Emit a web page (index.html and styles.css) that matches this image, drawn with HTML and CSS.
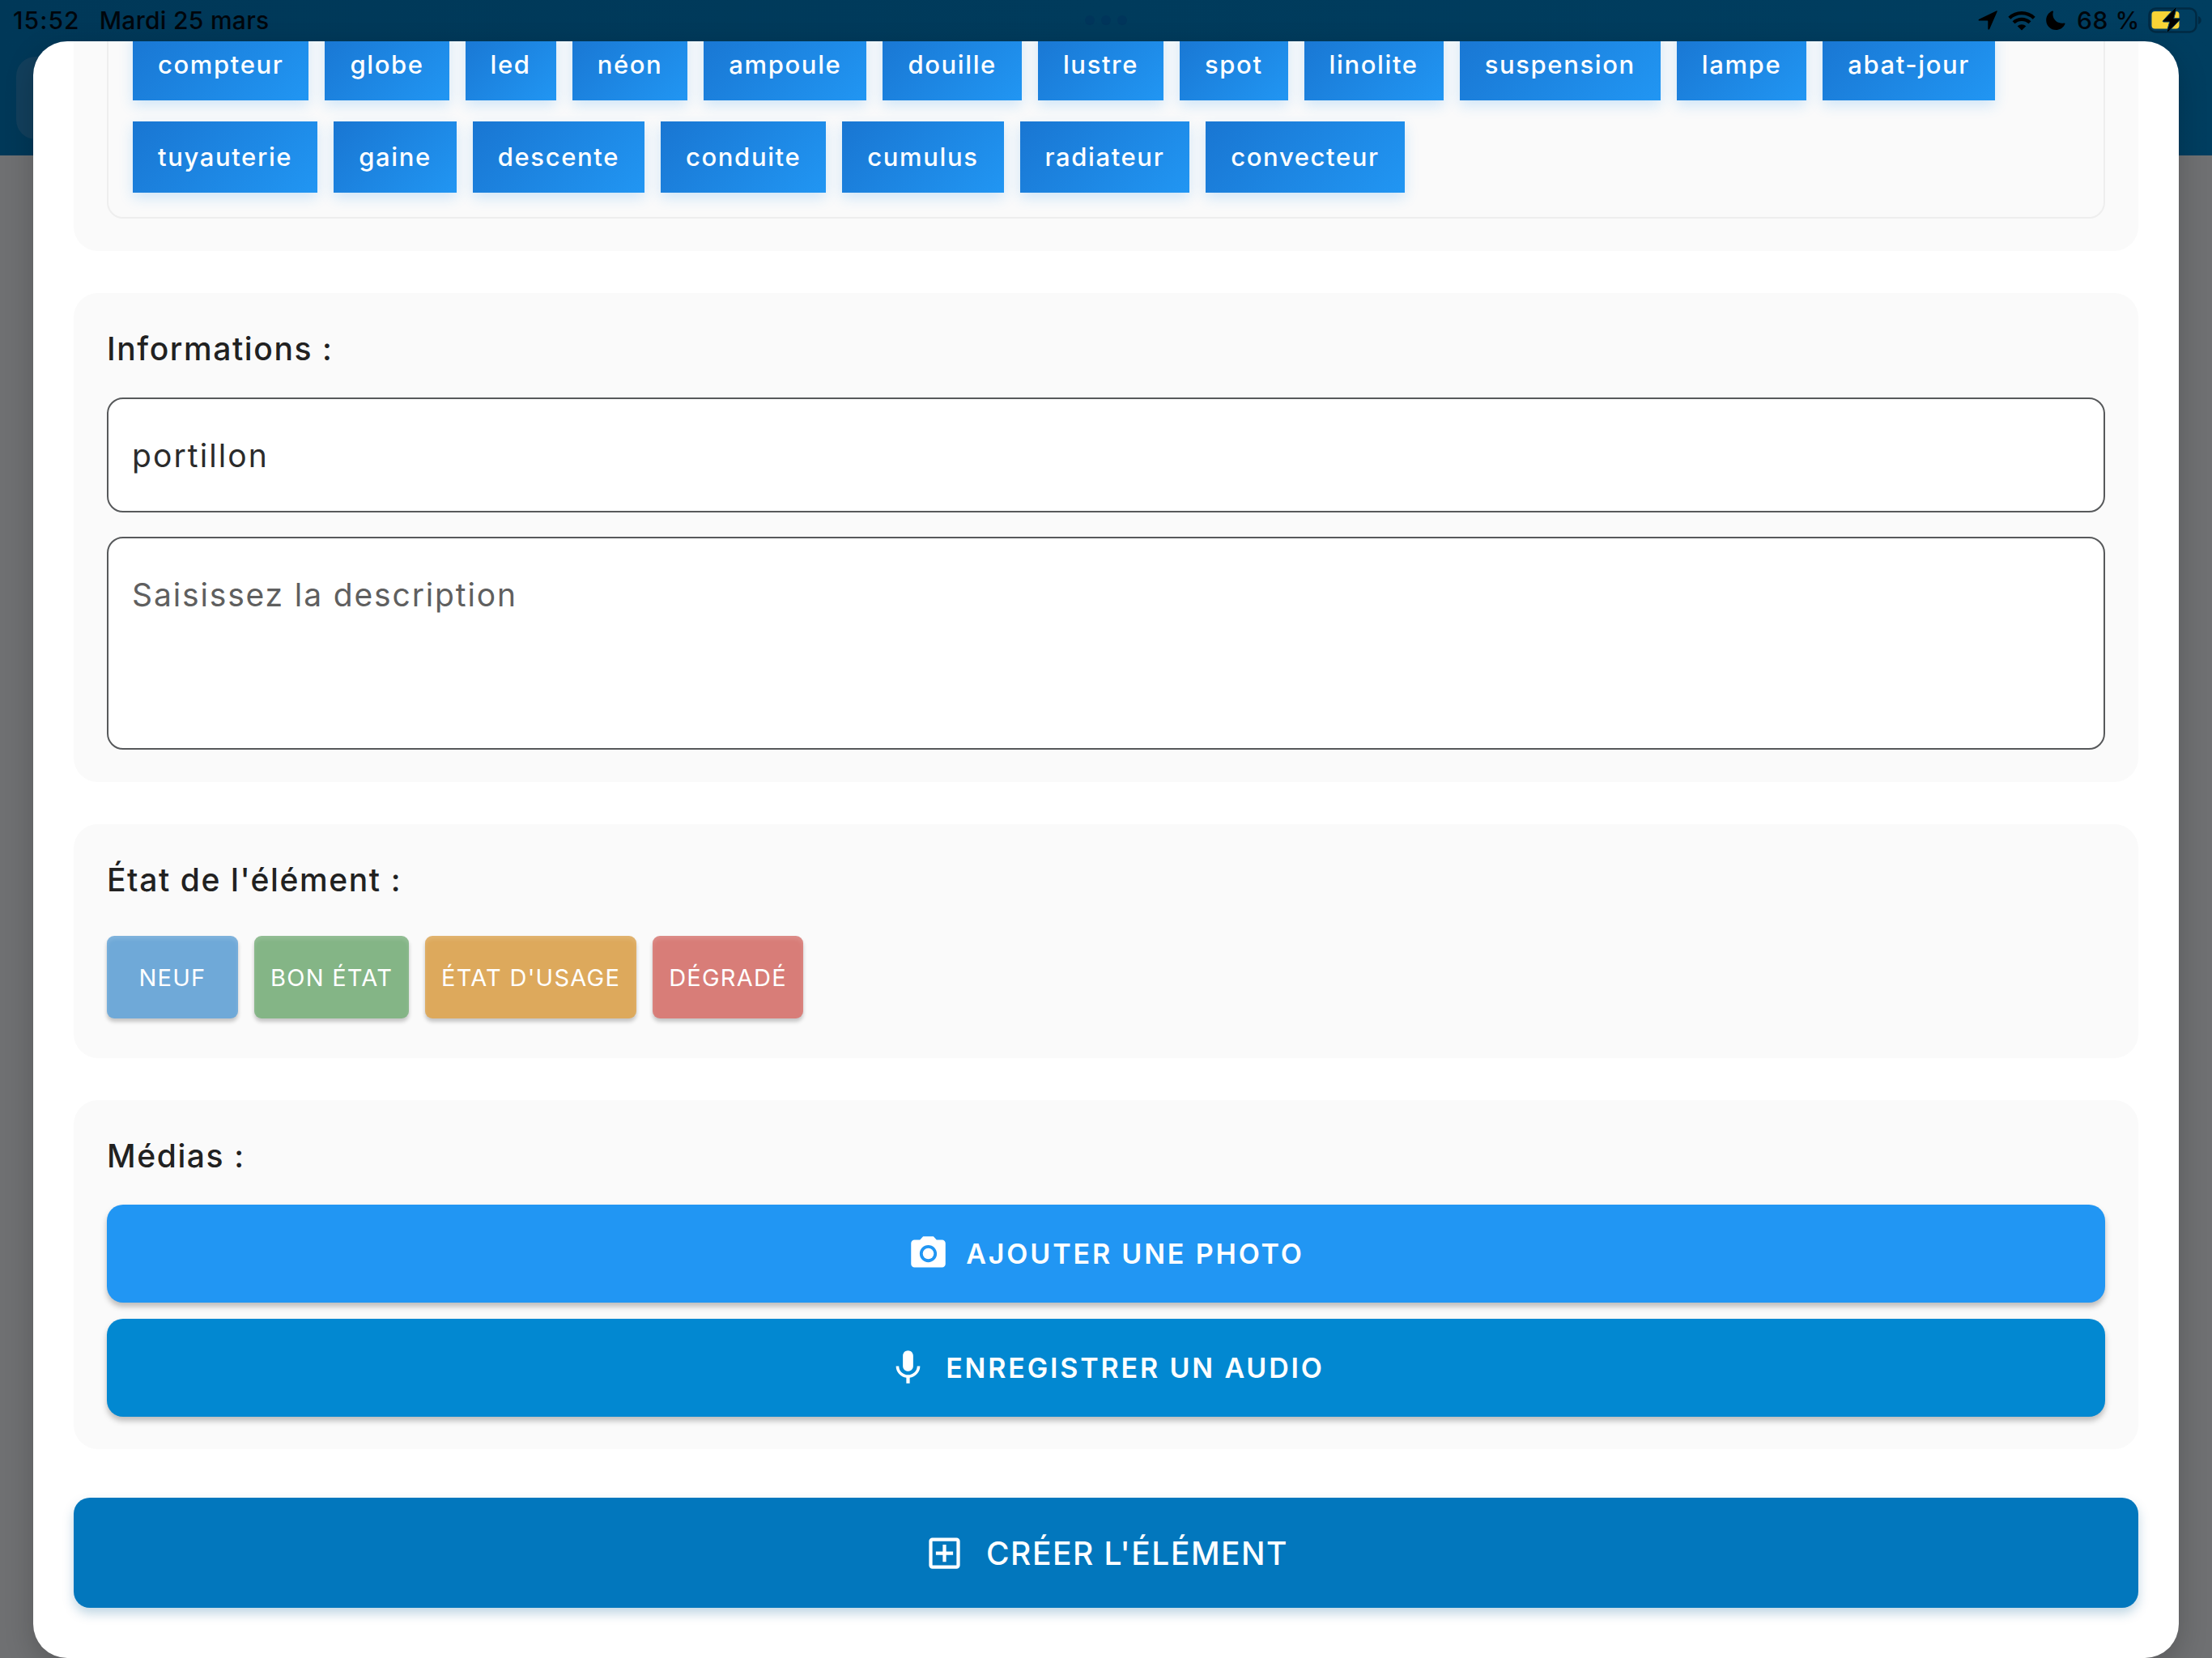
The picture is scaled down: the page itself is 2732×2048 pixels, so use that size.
FILE: index.html
```
<!DOCTYPE html>
<html lang="fr">
<head>
    <meta charset="UTF-8">
    <meta name="viewport" content="width=device-width, initial-scale=1.0">
    <title>Créer un élément</title>
    <link rel="stylesheet" href="styles.css">
</head>
<body>
    <div class="app-bar"></div>
    <div class="back-button"></div>

    <div class="status-bar">
        <span class="status-time">15:52</span>
        <span class="status-date">Mardi 25 mars</span>
        <div class="status-icons">
            <svg class="icon-location" width="24" height="24" viewBox="0 0 24 24"><path d="M22.6.4c.9-.4 1.4.2 1 1.1L14.2 22.900c-.5 1.100-1.900.9-1.900-.3v-9.400c0-.4-.2-.6-.6-.6H1.600c-1.200 0-1.400-1.400-.3-1.900z"/></svg>
            <svg class="icon-wifi" width="34" height="25" viewBox="0 0 34 25">
                <path class="wave" d="M1.800 9.300a22 22 0 0 1 30.400 0"/>
                <path class="wave" d="M7 14.800a14.500 14.500 0 0 1 20 0"/>
                <path d="M17 24.600l-5.300-5.300a7.700 7.700 0 0 1 10.600 0z"/>
            </svg>
            <svg class="icon-moon" width="24" height="24" viewBox="0 0 24 24"><path d="M7.700.6C8.500.2 9.200.8 8.900 1.700 6.600 9 13 17.200 22.200 15.500c1-.2 1.600.4 1.200 1.300C21.400 21.200 17.300 24 12.600 24 5.600 24 .2 18.700.2 11.900.2 7 3.200 2.500 7.700.6z"/></svg>
            <span class="status-percent">68 %</span>
            <svg class="icon-battery" width="66" height="34" viewBox="0 0 66 34">
                <rect class="battery-body" x="1.500" y="2.500" width="58" height="29" rx="8"/>
                <rect class="battery-level" x="4.500" y="6" width="34" height="21.500" rx="4"/>
                <path class="battery-tip" d="M62 12c5 1.500 5 8.500 0 10z"/>
                <path class="bolt" d="M33.500 1.500L18.500 17.600c-.5.600-.2 1.400.6 1.400h7.600L23.200 31c-.4 1.300.6 1.700 1.500.8L39.400 16.300c.6-.7.300-1.500-.6-1.500h-7L35 2.500c.3-1.200-.7-1.900-1.500-1z"/>
            </svg>
        </div>
    </div>
    <div class="multitask-dots"><i></i><i></i><i></i></div>

    <div class="modal">
        <div class="card suggestions-card">
            <div class="suggestions">
                <button class="chip">compteur</button>
                <button class="chip">globe</button>
                <button class="chip">led</button>
                <button class="chip">néon</button>
                <button class="chip">ampoule</button>
                <button class="chip">douille</button>
                <button class="chip">lustre</button>
                <button class="chip">spot</button>
                <button class="chip">linolite</button>
                <button class="chip">suspension</button>
                <button class="chip">lampe</button>
                <button class="chip">abat-jour</button>
                <button class="chip">tuyauterie</button>
                <button class="chip">gaine</button>
                <button class="chip">descente</button>
                <button class="chip">conduite</button>
                <button class="chip">cumulus</button>
                <button class="chip">radiateur</button>
                <button class="chip">convecteur</button>
            </div>
        </div>

        <div class="card">
            <h2>Informations :</h2>
            <input class="field" type="text" value="portillon">
            <textarea class="field description" placeholder="Saisissez la description"></textarea>
        </div>

        <div class="card state-card">
            <h2>État de l'élément :</h2>
            <div class="states">
                <button class="state new">NEUF</button>
                <button class="state good">BON ÉTAT</button>
                <button class="state used">ÉTAT D'USAGE</button>
                <button class="state damaged">DÉGRADÉ</button>
            </div>
        </div>

        <div class="card">
            <h2>Médias :</h2>
            <div class="media-buttons">
                <button class="media photo">
                    <svg class="icon" viewBox="0 0 24 24"><circle cx="12" cy="12" r="3.200"/><path d="M9 2L7.170 4H4c-1.100 0-2 .9-2 2v12c0 1.100.9 2 2 2h16c1.100 0 2-.9 2-2V6c0-1.100-.9-2-2-2h-3.170L15 2H9zm3 15c-2.760 0-5-2.240-5-5s2.240-5 5-5 5 2.240 5 5-2.240 5-5 5z"/></svg>
                    AJOUTER UNE PHOTO
                </button>
                <button class="media audio">
                    <svg class="icon" viewBox="0 0 24 24"><path d="M12 14c1.660 0 2.990-1.340 2.990-3L15 5c0-1.660-1.340-3-3-3S9 3.340 9 5v6c0 1.660 1.340 3 3 3zm5.300-3c0 3-2.540 5.100-5.300 5.100S6.700 14 6.700 11H5c0 3.410 2.720 6.230 6 6.720V21h2v-3.280c3.280-.48 6-3.300 6-6.720h-1.700z"/></svg>
                    ENREGISTRER UN AUDIO
                </button>
            </div>
        </div>

        <button class="create">
            <svg class="icon" viewBox="0 0 24 24"><path d="M19 3H5c-1.110 0-2 .9-2 2v14c0 1.100.89 2 2 2h14c1.100 0 2-.9 2-2V5c0-1.100-.9-2-2-2zm0 16H5V5h14v14zm-8-2h2v-4h4v-2h-4V7h-2v4H7v2h4z"/></svg>
            CRÉER L'ÉLÉMENT
        </button>
    </div>
</body>
</html>
```
FILE: styles.css
```
* {
    box-sizing: border-box;
}
body {
    margin: 0;
    height: 2048px;
    overflow: hidden;
    position: relative;
    background-color: #6f7072;
    font-family: Inter, "Liberation Sans", sans-serif;
}
button {
    border: none;
    font-family: inherit;
    color: #fff;
    white-space: nowrap;
}

/* dimmed page behind the modal */
.app-bar {
    height: 192px;
    background: linear-gradient(90deg, #003858, #003e60);
}
.back-button {
    position: absolute;
    left: 20px;
    top: 70px;
    width: 102px;
    height: 102px;
    border-radius: 24px;
    background-color: #123f5c;
}

.status-bar {
    position: absolute;
    top: 0;
    left: 0;
    width: 100%;
    height: 50px;
    padding: 0 13px 0 16px;
    display: flex;
    align-items: center;
    font-size: 30px;
    font-weight: 500;
    color: #00060c;
}
.status-time {
    letter-spacing: 1.1px;
}
.status-date {
    margin-left: 24px;
    letter-spacing: 0.3px;
}
.status-icons {
    margin-left: auto;
    display: flex;
    align-items: center;
}
.status-percent {
    letter-spacing: 0.6px;
}
.icon-wifi {
    margin: 0 13px;
}
.icon-wifi .wave {
    fill: none;
    stroke: #000;
    stroke-width: 4.2px;
}
.icon-moon {
    margin-right: 14px;
}
.icon-battery {
    margin-left: 10px;
}
.battery-body {
    fill: none;
    stroke: #002a43;
    stroke-width: 2.5px;
}
.battery-level {
    fill: #f8d436;
}
.battery-tip {
    fill: #002a43;
}
.bolt {
    stroke: #003e60;
    stroke-width: 1px;
}
.multitask-dots {
    position: absolute;
    top: 19px;
    left: 1340px;
    display: flex;
    gap: 8px;
}
.multitask-dots i {
    width: 12px;
    height: 12px;
    border-radius: 50%;
    background-color: #00355b;
}

.modal {
    position: absolute;
    top: 51px;
    left: 41px;
    width: 2650px;
    height: 1997px;
    padding: 0 50px;
    display: flex;
    flex-direction: column;
    gap: 52px;
    overflow: hidden;
    background-color: #fff;
    border-radius: 42px;
    box-shadow: 0 12px 36px rgba(0, 0, 0, 0.2);
}
.card {
    flex-shrink: 0;
    padding: 41px 41px 40px;
    background-color: #fafafa;
    border-radius: 30px;
}
.card h2 {
    margin: 0 0 32px;
    font-size: 39px;
    font-weight: 500;
    line-height: 56px;
    letter-spacing: 1.6px;
    color: #212121;
}

/* scrolled partly out of view */
.suggestions-card {
    margin-top: -88px;
}
.suggestions {
    display: flex;
    flex-wrap: wrap;
    gap: 26px 20px;
    padding: 30px;
    border: 2px solid #eee;
    border-radius: 20px;
}
.chip {
    height: 88px;
    padding: 0 31px 1px;
    font-size: 31px;
    font-weight: 500;
    letter-spacing: 1.62px;
    background: linear-gradient(135deg, #1976d2, #2196f3);
    box-shadow: 0 6px 16px rgba(33, 150, 243, 0.2);
}

.field {
    display: block;
    width: 100%;
    height: 142px;
    padding: 0 29px;
    border: 2px solid #57595b;
    border-radius: 20px;
    background-color: #fff;
    font-family: inherit;
    font-size: 39px;
    letter-spacing: 2.1px;
    color: #2b2b2b;
}
.description {
    height: 263px;
    margin-top: 30px;
    padding: 42px 29px;
    line-height: 56px;
    letter-spacing: 1.86px;
    resize: none;
}
.description::placeholder {
    color: #5f5f5f;
    opacity: 1;
}

.state-card {
    padding-bottom: 49px;
}
.state-card h2 {
    margin-bottom: 41px;
}
.states {
    display: flex;
    gap: 20px;
}
.state {
    min-width: 162px;
    height: 102px;
    padding: 0 20px;
    border-radius: 9px;
    font-size: 29px;
    letter-spacing: 1.25px;
    box-shadow: 0 4px 5px rgba(0, 0, 0, 0.22), inset 0 4px 5px rgba(255, 255, 255, 0.13);
}
.new {
    background-color: #6fa9d8;
}
.good {
    background-color: #84b586;
}
.used {
    background-color: #dda95c;
}
.damaged {
    background-color: #d87d78;
}

.media-buttons {
    display: flex;
    flex-direction: column;
    gap: 20px;
}
.media {
    height: 121px;
    display: flex;
    align-items: center;
    justify-content: center;
    gap: 21px;
    border-radius: 20px;
    font-size: 34px;
    font-weight: 600;
    letter-spacing: 2.85px;
    box-shadow: 0 5px 7px rgba(0, 0, 0, 0.25);
}
.photo {
    background-color: #2196f3;
}
.audio {
    background-color: #0288d1;
}
.icon {
    width: 51px;
    height: 51px;
    fill: #fff;
}
.create {
    flex-shrink: 0;
    height: 136px;
    margin-top: 8px;
    display: flex;
    align-items: center;
    justify-content: center;
    gap: 26px;
    border-radius: 20px;
    background-color: #0277bd;
    font-size: 39px;
    font-weight: 500;
    letter-spacing: 1.5px;
    box-shadow: 0 7px 14px rgba(2, 90, 145, 0.25);
}
```
